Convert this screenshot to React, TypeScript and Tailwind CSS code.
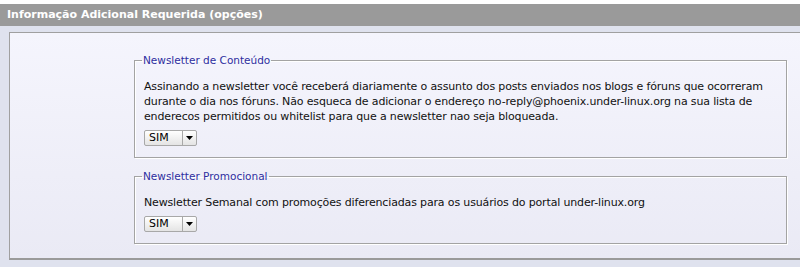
import React from "react";

function Select() {
  return (
    <div className="mt-[6px] flex h-[16px] w-[53px] items-stretch rounded-[2px] border border-[#a8a8a8] bg-gradient-to-b from-[#ffffff] to-[#e4e4e4] text-[11px] leading-[14px] text-black">
      <div className="flex w-[37px] items-center pl-[4px]">SIM</div>
      <div className="flex flex-1 items-center justify-center border-l border-[#a8a8a8]">
        <svg width="7" height="4" viewBox="0 0 7 4">
          <path d="M0 0 L7 0 L3.5 4 Z" fill="#000" />
        </svg>
      </div>
    </div>
  );
}

function Box({ legend, children }: { legend: string; children: React.ReactNode }) {
  return (
    <fieldset className="w-[653px] border border-[#a3a3a3] pl-[9px] pr-[9px] pb-[11px] shadow-[inset_1px_1px_0_#ffffff,1px_1px_0_#ffffff]">
      <legend className="ml-[-2px] px-[1px] text-[10.5px] leading-[13px] text-[#2e2ea0]">{legend}</legend>
      <div className="mt-[12px] text-[11px] leading-[15px] tracking-[-0.15px] text-[#111]">{children}</div>
      <Select />
    </fieldset>
  );
}

export default function App() {
  return (
    <div className="h-[279px] w-[800px] overflow-hidden bg-white" style={{ fontFamily: '"DejaVu Sans", Verdana, sans-serif' }}>
      <div className="h-[4px] bg-white" />
      <div className="h-[22px] bg-[#9a9a9a] pl-[7px] text-[11px] font-bold leading-[22px] text-white">
        Informação Adicional Requerida (opções)
      </div>
      <div className="bg-[#dfe2ee] pl-[9px] pt-[6px] pb-[7px]">
        <div className="border-l border-t border-[#a0a0a0] border-b-2 border-b-[#9a9a9a] bg-gradient-to-b from-[#f5f5fd] to-[#eaeaf5] pl-[124px] pt-[21px] pb-[14px]">
          <Box legend="Newsletter de Conteúdo">
            Assinando a newsletter você receberá diariamente o assunto dos posts enviados nos blogs e fóruns que ocorreram durante o dia nos fóruns. Não esqueca de adicionar o endereço no-reply@phoenix.under-linux.org na sua lista de enderecos permitidos ou whitelist para que a newsletter nao seja bloqueada.
          </Box>
          <div className="h-[12px]" />
          <Box legend="Newsletter Promocional">
            Newsletter Semanal com promoções diferenciadas para os usuários do portal under-linux.org
          </Box>
        </div>
      </div>
    </div>
  );
}
